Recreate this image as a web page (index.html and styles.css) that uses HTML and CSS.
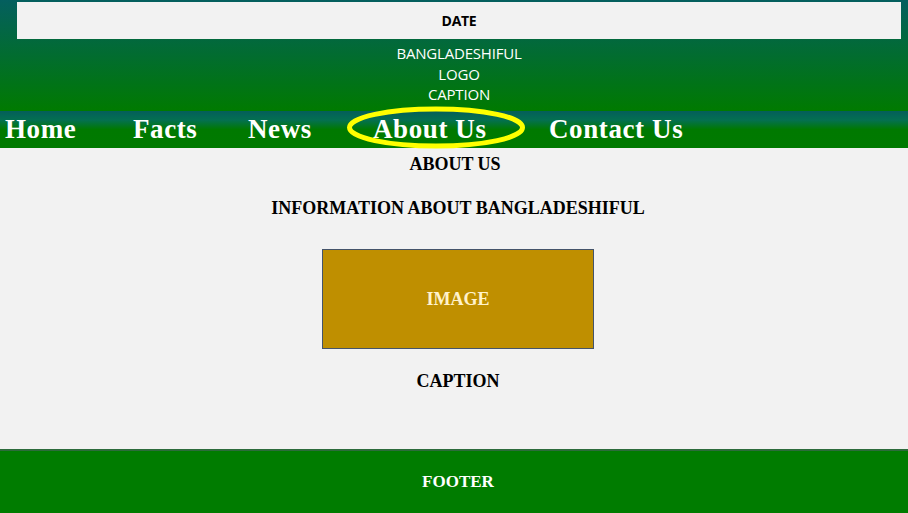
FILE: index.html
```html
<!DOCTYPE html>
<html>
<head>
<meta charset="utf-8">
<link rel="stylesheet" href="styles.css">
</head>
<body>
<header class="header">
  <div class="date-bar">DATE</div>
  <div class="brand">
    <div>BANGLADESHIFUL</div>
    <div>LOGO</div>
    <div>CAPTION</div>
  </div>
</header>
<nav class="nav">
  <a class="nav-item home">Home</a>
  <a class="nav-item facts">Facts</a>
  <a class="nav-item news">News</a>
  <a class="nav-item about">About Us
    <svg class="ring" width="178" height="52" viewBox="0 0 178 52"><ellipse cx="89" cy="25.5" rx="86.5" ry="18.5" fill="none" stroke="#ffff00" stroke-width="5"/></svg>
  </a>
  <a class="nav-item contact">Contact Us</a>
</nav>
<main class="main">
  <h1 class="title">ABOUT US</h1>
  <p class="info">INFORMATION ABOUT BANGLADESHIFUL</p>
  <div class="image">IMAGE</div>
  <p class="caption">CAPTION</p>
</main>
<footer class="footer">FOOTER</footer>
</body>
</html>
```
FILE: styles.css
```css
* { box-sizing: border-box; margin: 0; padding: 0; }
html, body { width: 908px; height: 513px; overflow: hidden; }
body {
  background: #f2f2f2;
  font-family: "Liberation Serif", serif;
  display: flex;
  flex-direction: column;
}
.header {
  height: 111px;
  background: linear-gradient(to bottom, #045f5f 0%, #007a00 100%);
  padding: 2px 7px 0 17px;
  font-family: "Open Sans", sans-serif;
}
.date-bar {
  height: 37px;
  background: #f2f2f2;
  color: #000;
  font-weight: bold;
  font-size: 14px;
  display: flex;
  align-items: center;
  justify-content: center;
  letter-spacing: -0.3px;
}
.brand {
  color: #fff;
  font-size: 15px;
  line-height: 20.5px;
  text-align: center;
  padding-top: 4px;
  letter-spacing: -0.2px;
}
.nav {
  height: 37px;
  background: linear-gradient(to bottom, #045e5a 0%, #047050 25%, #007900 50%, #007a00 100%);
  position: relative;
  z-index: 2;
}
.nav-item {
  color: #fff;
  font-weight: bold;
  font-size: 27px;
  position: absolute;
  top: 3px;
  white-space: nowrap;
  letter-spacing: 0.6px;
}
.home { left: 5px; }
.facts { left: 133px; }
.news { left: 248px; }
.about { left: 373px; }
.contact { left: 549px; }
.ring {
  position: absolute;
  left: -26px;
  top: -12px;
}
.main {
  height: 301px;
  display: flex;
  flex-direction: column;
  align-items: center;
  color: #000;
  font-weight: bold;
  padding-left: 8px;
}
.title {
  font-size: 18px;
  margin-top: 5px;
  margin-left: -6px;
  line-height: 22px;
}
.info {
  font-size: 18px;
  margin-top: 22px;
  line-height: 22px;
}
.image {
  width: 272px;
  height: 100px;
  background: #bf8f00;
  border: 1px solid #44546a;
  color: #fff2cc;
  font-size: 18px;
  display: flex;
  align-items: center;
  justify-content: center;
  margin-top: 30px;
}
.caption {
  font-size: 18px;
  margin-top: 21px;
  line-height: 22px;
}
.footer {
  height: 64px;
  background: #007c00;
  border-top: 2px solid #2d6b3c;
  color: #fff;
  font-weight: bold;
  font-size: 17px;
  display: flex;
  align-items: center;
  justify-content: center;
  padding-left: 8px;
}
```
